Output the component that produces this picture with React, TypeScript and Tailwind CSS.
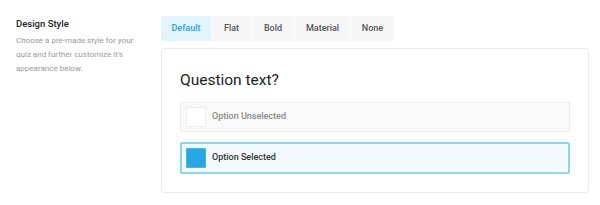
import { useState } from 'react';

const styles = [
  { name: 'Default', width: 'w-[50px]' },
  { name: 'Flat', width: 'w-[39px]' },
  { name: 'Bold', width: 'w-[42px]' },
  { name: 'Material', width: 'w-[55px]' },
  { name: 'None', width: 'w-[43px]' },
];

export default function App() {
  const [active, setActive] = useState('Default');

  return (
    <div className="w-[600px] h-[205px] bg-white font-['Roboto',sans-serif] flex pl-4 pr-[11px] pt-4">
      {/* Left description */}
      <div className="w-[145px] shrink-0">
        <h3 className="text-[9.5px] leading-[14px] font-medium text-[#222] pt-[1px]">Design Style</h3>
        <p className="mt-[3px] text-[8px] leading-[14px] text-[#9a9a9a] w-[125px]">
          Choose a pre-made style for your quiz and further customize it's appearance below.
        </p>
      </div>

      {/* Right side */}
      <div className="flex-1">
        <div className="flex gap-px">
          {styles.map((s, i) => (
            <button
              key={s.name}
              onClick={() => setActive(s.name)}
              className={`${s.width} h-[25px] text-[9px] font-medium text-center ${
                i === 0 ? 'rounded-l-[3px]' : ''
              } ${i === styles.length - 1 ? 'rounded-r-[3px]' : ''} ${
                active === s.name ? 'bg-[#e2f4fc] text-[#29a5de]' : 'bg-[#f7f7f7] text-[#555]'
              }`}
            >
              {s.name}
            </button>
          ))}
        </div>

        {/* Preview card */}
        <div className="mt-[7px] h-[145px] border border-[#ebebeb] rounded-[3px] px-[18px] pt-[19px]">
          <h2 className="text-[15.5px] leading-[24px] font-normal text-[#222] mb-[10px]">Question text?</h2>

          <div className="flex flex-col gap-[10px]">
            <div className="h-[30px] flex items-center gap-[6px] pl-[5px] border border-[#ececec] bg-[#f9f9f9] rounded-[2px]">
              <div className="w-[20px] h-[20px] bg-white border border-[#eeeeee] rounded-[1px]" />
              <span className="text-[9px] font-medium text-[#8a8a8a]">Option Unselected</span>
            </div>
            <div className="h-[32px] flex items-center gap-[6px] pl-[4px] border-2 border-[#8fd4f2] bg-[#f2fafe] rounded-[2px]">
              <div className="w-[20px] h-[20px] bg-[#27a6e1] border border-[#4bb6e6] rounded-[1px]" />
              <span className="text-[9px] font-medium text-[#333]">Option Selected</span>
            </div>
          </div>
        </div>
      </div>
    </div>
  );
}
